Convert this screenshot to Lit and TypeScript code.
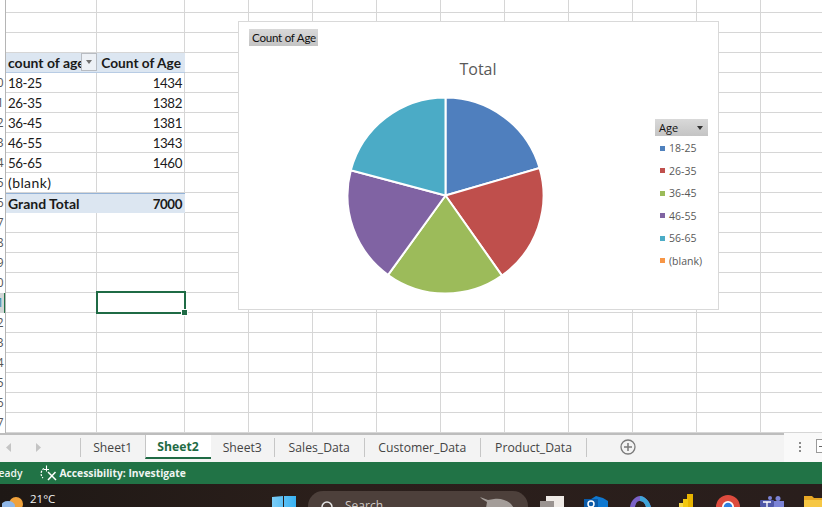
import { LitElement, html, css, svg } from "lit";
import { customElement } from "lit/decorators.js";

const pivot = [
  ["18-25", "1434"],
  ["26-35", "1382"],
  ["36-45", "1381"],
  ["46-55", "1343"],
  ["56-65", "1460"],
  ["(blank)", ""],
];
const slices = [
  { v: 1434, c: "#4f7fbe", l: "18-25", k: "#4f81bd" },
  { v: 1382, c: "#bf4f4c", l: "26-35", k: "#c0504d" },
  { v: 1381, c: "#9cbb5a", l: "36-45", k: "#9bbb59" },
  { v: 1343, c: "#8063a3", l: "46-55", k: "#8064a2" },
  { v: 1460, c: "#4babc6", l: "56-65", k: "#4bacc6" },
];
const rowDigits = ["", "", "0", "1", "2", "3", "4", "5", "6", "7", "8", "9", "0", "1", "2", "3", "4", "5", "6", "7"];
const tabs = ["Sheet1", "Sheet2", "Sheet3", "Sales_Data", "Customer_Data", "Product_Data"];
const tabWidths = [64.5, 66, 64.5, 89.5, 116.5, 106];

function pie() {
  const cx = 98.5, cy = 98.5, r = 98;
  let a = 0;
  return slices.map((s) => {
    const b = a + (s.v / 7000) * Math.PI * 2;
    const p = (t: number) => `${cx + r * Math.sin(t)} ${cy - r * Math.cos(t)}`;
    const d = `M${cx} ${cy}L${p(a)}A${r} ${r} 0 0 1 ${p(b)}Z`;
    a = b;
    return svg`<path d=${d} fill=${s.c} stroke="#fff" stroke-width="2" stroke-linejoin="round"/>`;
  });
}

@customElement("app-root")
export class AppRoot extends LitElement {
  static styles = css`
    :host { display: block; width: 822px; height: 507px; overflow: hidden; font-family: "Open Sans", "Noto Sans", sans-serif; background: #fff; }
    .sheet { position: relative; height: 433px; overflow: hidden; background: #fff; display: grid; grid-template-columns: 6px 1fr; }
    .heads { border-right: 1px solid #b5b5b5; padding-top: 33px; display: flex; flex-direction: column; box-sizing: border-box; }
    .heads div { height: 20px; flex: none; line-height: 20px; font-size: 12px; color: #555; display: flex; justify-content: flex-end; overflow: hidden; }
    .heads div.sel { background: #d2d6d6; color: #2a8aa8; box-shadow: inset -1px 0 0 #217346; }
    .heads span { margin-right: 1.5px; }
    .cells {
      position: relative;
      display: flex;
      background-image: linear-gradient(to bottom, #d6d6d6 1px, transparent 1px);
      background-size: 100% 20px;
      background-position: 0 12px;
    }
    .col1 { width: 91px; flex: none; border-right: 1px solid #d6d6d6; box-sizing: border-box; }
    .col2 { width: 88px; flex: none; border-right: 1px solid #d6d6d6; box-sizing: border-box; }
    .colrest {
      flex: 1;
      background-image: linear-gradient(to right, transparent 63px, #d6d6d6 63px);
      background-size: 64px 100%;
    }
    .pivot { position: absolute; left: 0; top: 53px; width: 179px; display: grid; grid-template-columns: 91px 88px; grid-auto-rows: 20px; font-size: 14px; line-height: 20px; color: #1a1a1a; font-family: Lato, "Open Sans", sans-serif; }
    .pivot > div { padding: 0 3px 0 2px; white-space: nowrap; overflow: hidden; box-sizing: border-box; }
    .pivot > div.dg { font-size: 13.3px; letter-spacing: -0.4px; }
    .pivot > div.bl { letter-spacing: 0.4px; }
    .num { text-align: right; }
    .hd { background: #dce6f1; font-weight: 700; border-bottom: 1px solid #b8cce4; position: relative; }
    .pivot > div.hd.num { font-size: 13.7px; padding-right: 4px; }
    .drop { position: absolute; right: 0; top: 0; width: 16px; height: 18px; background: #edf1f6; border: 1px solid #b8bcc2; box-sizing: border-box; display: flex; align-items: center; justify-content: center; }
    .drop i { width: 0; height: 0; border: 3.5px solid transparent; border-top: 4px solid #707070; border-bottom: 0; }
    .tot { background: #dce6f1; font-weight: 700; border-top: 1px solid #95b3d7; }
    .active { position: absolute; left: 90px; top: 291px; width: 90px; height: 23px; border: 2px solid #1f6b45; box-sizing: border-box; }
    .active::after { content: ""; position: absolute; right: -4px; bottom: -4px; width: 5px; height: 5px; background: #1f6b45; border: 1px solid #fff; }
    .chart { position: absolute; left: 238px; top: 21px; width: 481px; height: 289px; background: #fff; border: 1px solid #d9d9d9; box-sizing: border-box; }
    .field { position: absolute; left: 10px; top: 7px; height: 17px; width: 69px; box-sizing: border-box; padding: 0 3px; background: linear-gradient(#d9d9d9, #c4c4c4); font-size: 11.6px; line-height: 17px; color: #111; letter-spacing: -0.25px; font-family: Lato, sans-serif; white-space: nowrap; }
    .title { position: absolute; left: 0; width: 478px; top: 36px; text-align: center; font-size: 16px; line-height: 22px; color: #595959; }
    .pie { position: absolute; left: 108px; top: 75px; width: 197px; height: 197px; display: block; overflow: visible; }
    .legend { position: absolute; left: 416px; top: 97px; width: 53px; font-size: 10.5px; color: #595959; }
    .lh { height: 17px; background: linear-gradient(#d9d9d9, #c4c4c4); color: #111; line-height: 17px; font-size: 11px; padding-left: 4px; display: flex; justify-content: space-between; align-items: center; margin-bottom: 1px; }
    .lh i { width: 0; height: 0; border: 3.5px solid transparent; border-top: 4px solid #333; border-bottom: 0; margin-right: 5px; }
    .li { height: 22.5px; display: flex; align-items: center; gap: 4px; padding-left: 5px; white-space: nowrap; }
    .li b { width: 5px; height: 5px; display: block; flex: none; }
    .tabs { height: 29px; box-sizing: border-box; border-top: 2px solid #bdbdbd; background: #f3f3f3; display: flex; align-items: stretch; font-size: 12.2px; color: #444; padding-bottom: 4px; }
    .nav { width: 81px; flex: none; display: flex; align-items: center; gap: 23px; padding-left: 6px; box-sizing: border-box; border-right: 1px solid #c6c6c6; margin: 3px 0 1px; }
    .nav svg { width: 6px; height: 9px; display: block; }
    .tab { display: flex; align-items: center; justify-content: center; border-right: 1px solid #c6c6c6; margin: 3px 0 1px; box-sizing: border-box; }
    .tab.on { background: #fff; color: #1f6b45; font-weight: 700; margin: 0 0 -1px -1px; border-right: 0; border-left: 1px solid #c6c6c6; border-bottom: 2px solid #1f6b45; padding-top: 1px; }
    .add { margin-left: 33px; width: 16px; height: 16px; align-self: center; flex: none; }
    .rest { margin-left: auto; display: flex; align-items: center; gap: 15px; background: #f9f9f9; height: 29px; margin-top: -2px; margin-bottom: -4px; padding-left: 15px; }
    .dots { display: flex; flex-direction: column; gap: 2px; margin-top: -2px; }
    .dots i { width: 2px; height: 2px; background: #8a8a8a; display: block; }
    .tbtn { width: 6px; height: 14px; margin-top: -3px; border: 1px solid #9a9a9a; border-right: 0; background: #fff; box-sizing: border-box; display: flex; align-items: center; }
    .tbtn i { width: 3px; height: 1px; margin-left: 2px; background: #666; display: block; }
    .status { height: 22px; background: #217346; color: #f0f5f2; font-size: 10.3px; display: flex; align-items: center; font-family: "Open Sans", sans-serif; white-space: nowrap; overflow: hidden; }
    .status .ready { margin-left: -8px; margin-right: 17px; font-weight: 600; flex: none; }
    .status svg { width: 18px; height: 16px; margin-right: 2px; display: block; flex: none; }
    .status b { font-weight: 700; }
    .task { height: 23px; background: linear-gradient(90deg, #1e1815, #2b1f1b 40%, #291e1c); position: relative; overflow: hidden; color: #f2f2f2; font-size: 11.5px; }
    .task svg { display: block; position: absolute; }
    .temp { position: absolute; left: 30px; top: 7px; line-height: 15px; }
    .search { position: absolute; left: 308px; top: 7px; width: 220px; height: 30px; border-radius: 15px; background: #4d403b; color: #cfc9c6; font-size: 12px; }
    .search span { position: absolute; left: 37px; top: 7px; line-height: 16px; }
  `;

  render() {
    return html`
      <div class="sheet">
        <div class="heads">
          ${rowDigits.map((d, i) => html`<div class=${i === 13 ? "sel" : ""}><span>${d}</span></div>`)}
        </div>
        <div class="cells">
          <div class="col1"></div>
          <div class="col2"></div>
          <div class="colrest"></div>
          <div class="pivot">
            <div class="hd">count of age<span class="drop"><i></i></span></div>
            <div class="hd num">Count of Age</div>
            ${pivot.map((r) => html`<div class=${r[1] ? "dg" : "bl"}>${r[0]}</div><div class="num dg">${r[1]}</div>`)}
            <div class="tot">Grand Total</div>
            <div class="tot num dg">7000</div>
          </div>
          <div class="active"></div>
        </div>
        <div class="chart">
          <div class="field">Count of Age</div>
          <div class="title">Total</div>
          <svg class="pie" viewBox="0 0 197 197">${pie()}</svg>
          <div class="legend">
            <div class="lh">Age<i></i></div>
            ${slices.map((s) => html`<div class="li"><b style="background:${s.k}"></b>${s.l}</div>`)}
            <div class="li"><b style="background:#f79646"></b>(blank)</div>
          </div>
        </div>
      </div>
      <div class="tabs">
        <div class="nav">
          <svg viewBox="0 0 6 9"><path d="M5 0v9L0 4.5z" fill="#c4c4c4"/></svg>
          <svg viewBox="0 0 6 9"><path d="M1 0v9l5-4.5z" fill="#c4c4c4"/></svg>
        </div>
        ${tabs.map((t, i) => html`<div class="tab ${i === 1 ? "on" : ""}" style="width:${tabWidths[i]}px">${t}</div>`)}
        <svg class="add" viewBox="0 0 16 16"><circle cx="8" cy="8" r="7" fill="none" stroke="#7a7a7a" stroke-width="1.3"/><path d="M8 4v8M4 8h8" stroke="#7a7a7a" stroke-width="1.5"/></svg>
        <div class="rest"><div class="dots"><i></i><i></i><i></i></div><div class="tbtn"><i></i></div></div>
      </div>
      <div class="status">
        <span class="ready">Ready</span>
        <svg viewBox="0 0 18 16">
          <path d="M5 3.5A6 6 0 0 0 4 13" fill="none" stroke="#fff" stroke-width="1.2" stroke-dasharray="2 1.2"/>
          <path d="M7.5 0.5v6M5 4.5h5" fill="none" stroke="#fff" stroke-width="1.1"/>
          <path d="M9 7l8 8M16.5 7L9 15" fill="none" stroke="#fff" stroke-width="1.5"/>
        </svg>
        <b>Accessibility: Investigate</b>
      </div>
      <div class="task">
        <svg style="left:2px;top:10px" width="22" height="13" viewBox="0 0 22 13"><circle cx="14" cy="10" r="7" fill="#f0a23c"/><ellipse cx="6" cy="12" rx="7" ry="5" fill="#8fb7e8"/></svg>
        <div class="temp">21°C</div>
        <svg style="left:272px;top:12px" width="24" height="11" viewBox="0 0 24 11"><defs><linearGradient id="w" x1="0" y1="0" x2="1" y2="0"><stop offset="0" stop-color="#7ccdf7"/><stop offset="1" stop-color="#38b2f3"/></linearGradient></defs><path d="M0 1l11-1v11H0zM12 0h12v11H12z" fill="url(#w)"/></svg>
        <div class="search">
          <svg style="left:12px;top:9px" width="14" height="14" viewBox="0 0 14 14"><circle cx="7" cy="7" r="5" fill="none" stroke="#e6e6e6" stroke-width="1.5"/></svg>
          <span>Search</span>
          <svg style="left:172px;top:5px" width="36" height="12" viewBox="0 0 36 12"><path d="M0 1l8 3 6-1c6-1 13 1 17 5l3 4H6l1-6-5-3z" fill="#a49d99"/></svg>
        </div>
        <svg style="left:540px;top:12px" width="24" height="11" viewBox="0 0 24 11"><rect x="6" width="18" height="11" fill="#efeae6"/><rect y="5" width="14" height="6" fill="#9a9390"/></svg>
        <svg style="left:584px;top:12px" width="24" height="11" viewBox="0 0 24 11"><path d="M4 5l8-5 7 2 5 3v6H4z" fill="#0f78d0"/><rect x="0" y="3" width="14" height="8" fill="#0a5aa8"/><circle cx="7" cy="8" r="3" fill="none" stroke="#fff" stroke-width="1.5"/></svg>
        <svg style="left:630px;top:12px" width="21" height="11" viewBox="0 0 21 11"><path d="M0 11C1 4 6 0 10 0s9 4 11 11h-5C15 7 13 5 10 5S6 7 5 11z" fill="#7a62c8"/><path d="M10 0c4 0 9 4 11 11h-5C15 7 13 5 10 5z" fill="#3fa6d8"/></svg>
        <svg style="left:679px;top:10px" width="14" height="13" viewBox="0 0 14 13"><rect x="8" width="6" height="13" fill="#e8b400"/><rect x="4" y="5" width="5" height="8" fill="#f2c811"/><rect y="9" width="4" height="4" fill="#f7d94c"/></svg>
        <svg style="left:716px;top:11px" width="24" height="12" viewBox="0 0 24 12"><circle cx="12" cy="12" r="12" fill="#dd4b3e"/><path d="M12 12L0 12l0 4 24 0 0-4z" fill="#4caf50"/><path d="M12 12h12v4H12z" fill="#f5c518"/><circle cx="12" cy="12" r="6" fill="#fff"/><circle cx="12" cy="12" r="4.3" fill="#2f7fe0"/></svg>
        <svg style="left:760px;top:12px" width="24" height="11" viewBox="0 0 24 11"><circle cx="18" cy="2.5" r="2.5" fill="#7b83d6"/><circle cx="10" cy="2" r="2" fill="#7b83d6"/><rect x="12" y="5" width="12" height="6" fill="#7b83d6"/><rect y="4" width="14" height="7" rx="1" fill="#4f57a8"/><path d="M3 6h8M7 6v5" stroke="#fff" stroke-width="1.3"/></svg>
        <svg style="left:804px;top:12px" width="18" height="11" viewBox="0 0 18 11"><path d="M0 0h8l2 2h8v9H0z" fill="#e8a825"/><rect y="4" width="18" height="7" fill="#f6c744"/></svg>
      </div>
    `;
  }
}
